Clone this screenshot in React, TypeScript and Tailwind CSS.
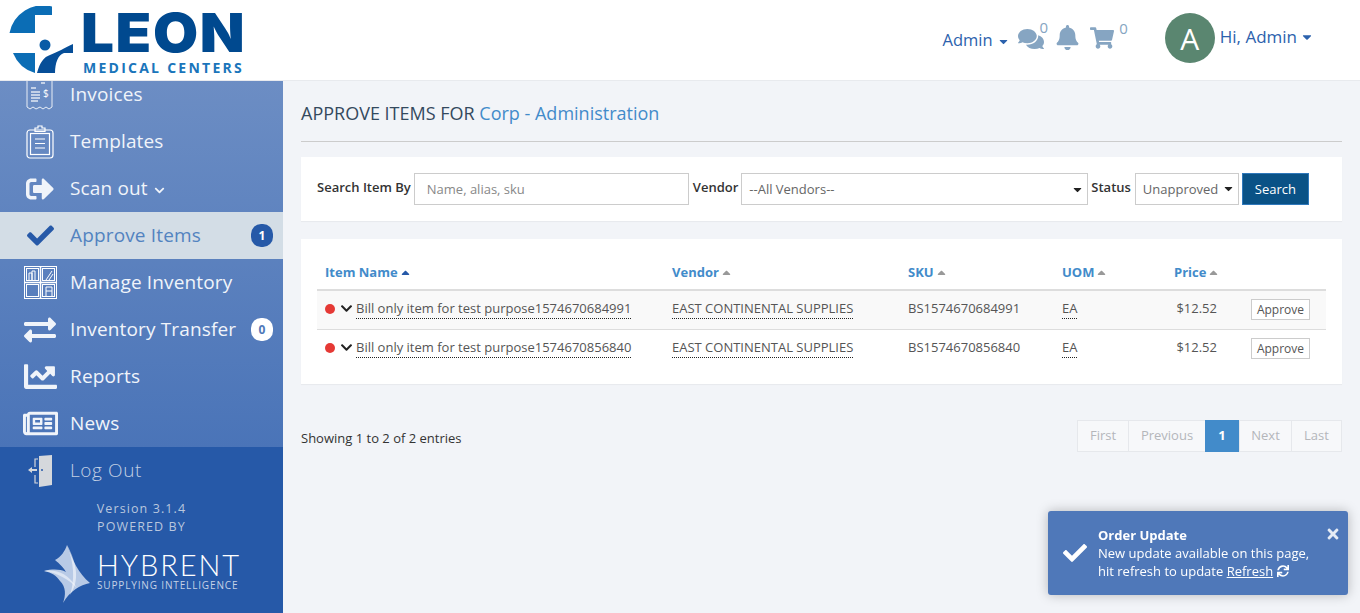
import type { ReactNode } from 'react'
import { FaBell, FaCaretDown, FaCaretUp, FaChartLine, FaCheck, FaChevronDown, FaComments, FaExchangeAlt, FaRegNewspaper, FaShoppingCart, FaSignOutAlt, FaSync, FaTimes } from 'react-icons/fa'

// Approve items page: header, scrolled sidebar, search bar, table, pager, toast.

const font = { fontFamily: '"Open Sans", "Liberation Sans", sans-serif' }

const InvoiceIcon = () => (
  <svg width="30" height="32" viewBox="0 0 30 32" fill="none" stroke="#fff" strokeWidth="1">
    <path d="M2 0v28l3 2 3-2 3 2 4-2 3 2 3-2 3 2 3-2V0z" opacity=".85" />
    <path d="M6 9h5M6 13h9M6 16h9M6 19h9M6 22h7M16 4h4" strokeWidth="1.4" opacity=".8" />
    <text x="18" y="18" fontSize="10" fill="#fff" stroke="none">$</text>
  </svg>
)

const ClipboardIcon = () => (
  <svg width="28" height="34" viewBox="0 0 28 34" fill="none" stroke="#fff" strokeWidth="1.2">
    <rect x="1" y="5" width="26" height="28" rx="3" />
    <rect x="4.5" y="8.5" width="19" height="21" />
    <path d="M9 5V3h3V1h4v2h3v3.500H9zM9 14h10M9 18.500h10M9 23h10" />
  </svg>
)

const ShelvesIcon = () => (
  <svg width="33" height="33" viewBox="0 0 33 33" fill="none" stroke="#fff" strokeWidth="1">
    <rect x=".5" y=".5" width="32" height="32" />
    <path d="M16.500 0v33M0 16.500h33" strokeWidth="1.500" />
    <rect x="2.500" y="2.500" width="12" height="12" />
    <rect x="18.500" y="2.500" width="12" height="12" />
    <rect x="2.500" y="18.500" width="12" height="12" />
    <rect x="18.500" y="18.500" width="12" height="12" />
    <path d="M5 14V7h3v7M8 14V5h3v9M22 14l6-9M25 14l4-6M22 31V21h6v10M22 25h6" />
  </svg>
)

const DoorIcon = () => (
  <svg width="24" height="32" viewBox="0 0 24 32" fill="none">
    <path d="M11 1l13-1v30l-13 2z" fill="#d5d8dc" />
    <path d="M10 4H7v8M10 28H7v-8" stroke="#d5d8dc" strokeWidth="1.200" />
    <path d="M0 15l4-3v2h5v2H4v2z" fill="#d5d8dc" />
    <circle cx="14" cy="15" r="1" fill="#2659a8" />
  </svg>
)

const LeonMark = () => (
  <svg width="66" height="68" viewBox="9 6 66 68" className="shrink-0">
    <path d="M52 6.500V15H35v18H9.500A34 34 0 0 1 52 6.500z" fill="#0b6db5" />
    <path d="M13 53h22v20A34 34 0 0 1 13 53z" fill="#0b6db5" />
    <circle cx="45" cy="45" r="5.500" fill="#0a5ba6" />
    <path d="M37 73c3-11 7-16 13-18 8-3 14-7 23-11v9h-9c-6 2-9 10-9 20z" fill="#064e98" />
  </svg>
)

const HybrentMark = () => (
  <svg width="48" height="60" viewBox="0 0 48 60" className="shrink-0">
    <path d="M23 0C29 16 34 28 46 38 36 40 26 46 19 58 22 50 22 42 16 36 12 30 8 28 0 26 8 24 16 24 22 27 18 20 13 17 11 15 17 12 21 6 23 0z" fill="#c9d6ec" opacity=".9" />
    <path d="M23 0C33 18 36 36 26 50 31 34 30 18 23 0z" fill="#fff" opacity=".55" />
    <path d="M0 26C12 24 24 28 33 43 24 34 14 28 0 26z" fill="#fff" opacity=".5" />
  </svg>
)

type NavItem = { label: string; icon: ReactNode; active?: boolean; badge?: string; caret?: boolean }

const nav: NavItem[] = [
  { label: 'Invoices', icon: <InvoiceIcon /> },
  { label: 'Templates', icon: <ClipboardIcon /> },
  { label: 'Scan out', icon: <FaSignOutAlt size={28} />, caret: true },
  { label: 'Approve Items', icon: <FaCheck size={27} className="text-[#2659a8]" />, active: true, badge: '1' },
  { label: 'Manage Inventory', icon: <ShelvesIcon /> },
  { label: 'Inventory Transfer', icon: <FaExchangeAlt size={32} />, badge: '0' },
  { label: 'Reports', icon: <FaChartLine size={33} /> },
  { label: 'News', icon: <FaRegNewspaper size={35} /> },
]

const rows = [
  { name: 'Bill only item for test purpose1574670684991', sku: 'BS1574670684991' },
  { name: 'Bill only item for test purpose1574670856840', sku: 'BS1574670856840' },
]

const columns = [
  { label: 'Item Name', width: 'w-[347px]', on: true },
  { label: 'Vendor', width: 'w-[236px]' },
  { label: 'SKU', width: 'w-[154px]' },
  { label: 'UOM', width: 'w-[112px]' },
  { label: 'Price', width: 'w-[59px]' },
]

const pager = [
  { label: 'First', width: 'w-[52px] -mr-[1px]' },
  { label: 'Previous', width: 'w-[78px] -mr-[1px]' },
  { label: '1', width: 'w-[34px] z-10', on: true },
  { label: 'Next', width: 'w-[53px] -mr-[1px]' },
  { label: 'Last', width: 'w-[51px]' },
]

function Sidebar() {
  return (
    <aside className="w-[283px] shrink-0 overflow-hidden flex flex-col bg-[#2659a8]">
      <div className="-mt-[10px] bg-linear-to-b from-[#6d8ec4] to-[#4a74b8]">
        {nav.map(item => (
          <div key={item.label} className={`h-[47px] flex items-center pl-[22px] pr-[10px] ${item.active ? 'bg-[#d3dde6] text-[#5283c0]' : 'text-[#f0f4fa]'}`}>
            <span className="w-[36px] flex justify-center shrink-0">{item.icon}</span>
            <span className="ml-[12px] text-[19px] tracking-[0.15px] whitespace-nowrap">{item.label}</span>
            {item.caret && <FaChevronDown size={11} className="ml-[6px] mt-[3px]" />}
            {item.badge && (
              <span className={`ml-auto w-[22px] h-[23px] rounded-[10px] flex items-center justify-center text-[12px] font-bold ${item.active ? 'bg-[#2659a8] text-white' : 'bg-white text-[#4f78b9]'}`}>
                {item.badge}
              </span>
            )}
          </div>
        ))}
      </div>
      <div className="flex-1">
        <div className="h-[47px] flex items-center pl-[22px]">
          <span className="w-[36px] flex justify-center shrink-0"><DoorIcon /></span>
          <span className="ml-[12px] text-[19px] tracking-[0.6px] font-light text-[#c3d0e4]">Log Out</span>
        </div>
        <div className="text-center text-[12.5px] leading-[18px] tracking-[1.1px] text-[#b9c7de] mt-[6px]">
          <div>Version 3.1.4</div>
          <div>POWERED BY</div>
        </div>
        <div className="flex items-start pl-[44px] mt-[9px]">
          <HybrentMark />
          <div className="ml-[5px] mt-[8px] text-white">
            <div className="text-[29px] leading-[24px] tracking-[1.9px]" style={{ fontFamily: 'Lato, sans-serif', fontWeight: 300 }}>HYBRENT</div>
            <div className="text-[10px] leading-[13px] tracking-[0.85px] text-[#c5d2e6] whitespace-nowrap mt-[2px]">SUPPLYING INTELLIGENCE</div>
          </div>
        </div>
      </div>
    </aside>
  )
}

function Header() {
  return (
    <header className="h-[81px] shrink-0 bg-white border-b border-[#e8eaee] flex items-start">
      <div className="flex items-start pl-[9px] pt-[6px]">
        <LeonMark />
        <div className="ml-[6px] text-[#00498f]">
          <div className="mt-[2px] text-[54px] leading-[50px] font-black tracking-[1.5px] origin-left scale-x-[1.08]" style={{ fontFamily: 'Inter, sans-serif' }}>LEON</div>
          <div className="ml-[2px] text-[14px] leading-[16px] font-bold tracking-[2.25px] text-[#1a75bb] whitespace-nowrap mt-[2px]">MEDICAL CENTERS</div>
        </div>
      </div>
      <div className="ml-auto flex items-start pr-[46px] text-[#2c62ad]">
        <div className="flex items-center mt-[29px] text-[16.5px] leading-[22px]">
          Admin<FaCaretDown size={13} className="ml-[4px] mt-[2px]" />
        </div>
        <div className="ml-[8px] mt-[26px] text-[#86a5c2]"><FaComments size={26} /></div>
        <span className="-ml-[4px] mt-[17px] text-[15px] leading-[20px] text-[#86a5c2]">0</span>
        <div className="ml-[7px] mt-[25px] text-[#86a5c2]"><FaBell size={25} /></div>
        <div className="ml-[10px] mt-[26px] text-[#86a5c2]"><FaShoppingCart size={24} /></div>
        <span className="ml-[5px] mt-[18px] text-[15px] leading-[20px] text-[#86a5c2]">0</span>
        <div className="ml-[37px] mt-[13px] w-[50px] h-[50px] rounded-full bg-[#5a8670] text-white text-[30px] flex items-center justify-center">A</div>
        <div className="ml-[5px] mt-[26px] flex items-center text-[17px] leading-[22px]">
          Hi, Admin<FaCaretDown size={14} className="ml-[3px]" />
        </div>
      </div>
    </header>
  )
}

function Field({ label, children }: { label: string; children: ReactNode }) {
  return (
    <>
      <label className="text-[13px] font-semibold text-[#333] -mt-[3px] whitespace-nowrap">{label}</label>
      {children}
    </>
  )
}

function SearchCard() {
  return (
    <div className="h-[64px] bg-white shadow-[0_1px_1px_rgba(0,0,0,0.04)] flex items-center pl-[16px] gap-[3px]">
      <Field label="Search Item By">
        <input placeholder="Name, alias, sku" className="w-[275px] h-[32px] mr-[1px] border border-[#ccc] px-[12px] text-[13px] placeholder:text-[#888] outline-none" />
      </Field>
      <Field label="Vendor">
        <div className="relative">
          <select className="appearance-none w-[347px] h-[32px] border border-[#ccc] bg-white px-[7px] pt-[1px] text-[13px] text-[#666]">
            <option>--All Vendors--</option>
          </select>
          <FaCaretDown size={13} className="absolute right-[4px] top-[10px] text-[#222]" />
        </div>
      </Field>
      <Field label="Status">
        <div className="relative ml-[1px]">
          <select className="appearance-none w-[104px] h-[32px] border border-[#ccc] bg-white px-[7px] pt-[1px] text-[13px] text-[#666]">
            <option>Unapproved</option>
          </select>
          <FaCaretDown size={13} className="absolute right-[4px] top-[9px] text-[#222]" />
        </div>
      </Field>
      <button className="w-[67px] h-[32px] pt-[1px] bg-[#0a5286] border border-[#2f78bb] text-white text-[13px]">Search</button>
    </div>
  )
}

function Dotted({ children }: { children: ReactNode }) {
  return <span className="border-b border-dotted border-[#222] pb-[1px]">{children}</span>
}

function ItemsTable() {
  return (
    <div className="mt-[18px] h-[145px] bg-white shadow-[0_1px_1px_rgba(0,0,0,0.04)] px-[16px] pt-[20px]">
      <table className="w-[1009px] table-fixed border-collapse text-[13px] text-[#555]">
        <thead>
          <tr className="h-[31px] border-b-2 border-[#ddd]">
            {columns.map(col => (
              <th key={col.label} className={`${col.width} px-[8px] pb-[3px] text-left font-bold text-[#428bca] text-[13px] whitespace-nowrap`}>
                {col.label}
                <FaCaretUp size={13} className={`inline ml-[1px] mb-[1px] ${col.on ? 'text-[#2659a8]' : 'text-[#999]'}`} />
              </th>
            ))}
            <th />
          </tr>
        </thead>
        <tbody>
          {rows.map((row, i) => (
            <tr key={row.sku} className={`h-[39px] ${i === 0 ? 'bg-[#f9f9f9] border-b border-[#ddd]' : ''}`}>
              <td className="px-[8px] pb-[2px] whitespace-nowrap">
                <span className="inline-block w-[10px] h-[10px] rounded-full bg-[#e53935] mr-[5px] align-[-1px]" />
                <FaChevronDown size={13} className="inline mr-[3px] text-[#222] align-[-2px]" />
                <Dotted>{row.name}</Dotted>
              </td>
              <td className="px-[8px] pb-[2px] whitespace-nowrap"><Dotted>EAST CONTINENTAL SUPPLIES</Dotted></td>
              <td className="px-[8px] pb-[2px]">{row.sku}</td>
              <td className="px-[8px] pb-[2px]"><Dotted>EA</Dotted></td>
              <td className="px-[8px] pb-[2px] text-right">$12.52</td>
              <td className="pr-[16px] text-right">
                <button className="w-[59px] h-[21px] border border-[#ccc] bg-white text-[12px] leading-[19px] text-[#555]">Approve</button>
              </td>
            </tr>
          ))}
        </tbody>
      </table>
    </div>
  )
}

function Toast() {
  return (
    <div className="fixed left-[1048px] top-[511px] w-[300px] h-[84px] rounded-[3px] bg-[#4f78b9] text-white shadow-[0_0_12px_rgba(0,0,0,0.25)] flex items-center pl-[15px] text-[13px] leading-[18px]">
      <FaCheck size={24} className="shrink-0" />
      <div className="ml-[11px] mt-[-1px]">
        <div className="font-bold">Order Update</div>
        <div>New update available on this page,</div>
        <div>hit refresh to update <span className="underline">Refresh</span> <FaSync size={12} className="inline align-[-1px]" /></div>
      </div>
      <FaTimes size={16} className="absolute right-[7px] top-[15px] text-[#e6ecf5]" />
    </div>
  )
}

export default function App() {
  return (
    <div className="h-screen overflow-hidden flex flex-col bg-[#f2f4f8]" style={font}>
      <Header />
      <div className="flex flex-1 min-h-0">
        <Sidebar />
        <main className="flex-1 px-[18px]">
          <h1 className="text-[18px] leading-[24px] pt-[20px] pb-[16px] text-[#34495e] border-b border-[#ccc]">
            APPROVE ITEMS FOR <span className="text-[#428bca]">Corp - Administration</span>
          </h1>
          <div className="mt-[15px]"><SearchCard /></div>
          <ItemsTable />
          <div className="mt-[36px] flex items-start justify-between">
            <span className="text-[13px] text-[#333] mt-[9px]">Showing 1 to 2 of 2 entries</span>
            <div className="flex h-[32px] text-[13px]">
              {pager.map(p => (
                <span key={p.label} className={`${p.width} flex items-center justify-center border ${p.on ? 'bg-[#428bca] border-[#428bca] text-white font-bold' : 'bg-[#f7f8fa] border-[#e6e8ec] text-[#b4b6ba]'}`}>
                  {p.label}
                </span>
              ))}
            </div>
          </div>
        </main>
      </div>
      <Toast />
    </div>
  )
}
